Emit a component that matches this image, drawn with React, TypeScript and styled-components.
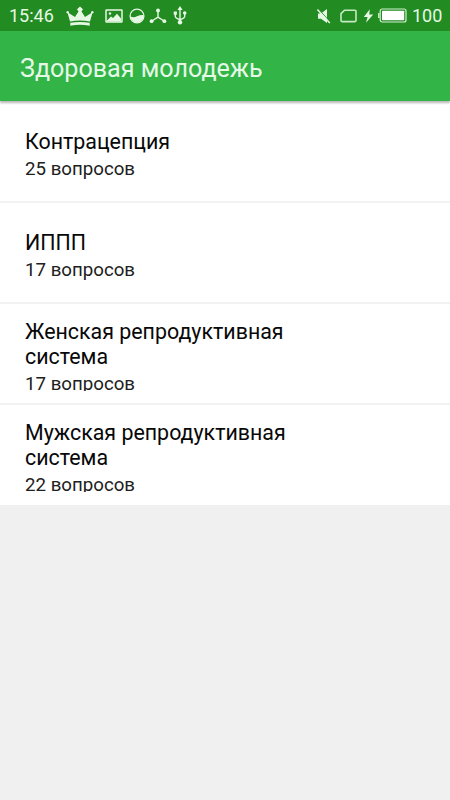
import React from "react";
import styled, { createGlobalStyle } from "styled-components";

const GlobalStyle = createGlobalStyle`
  html, body { margin: 0; padding: 0; }
  body { background: #f0f0f0; font-family: Roboto, "Noto Sans", sans-serif; }
`;

const Screen = styled.div`
  width: 450px;
  height: 800px;
  display: flex;
  flex-direction: column;
  overflow: hidden;
  background: #f0f0f0;
`;

const StatusBar = styled.div`
  height: 31px;
  flex: none;
  display: flex;
  align-items: center;
  justify-content: space-between;
  padding: 0 7px 0 9px;
  box-sizing: border-box;
  background: #228b22;
  color: #e6f8e4;
`;

const StatusGroup = styled.div`
  display: flex;
  align-items: center;
  height: 31px;
`;

const StatusText = styled.span<{ $width: number; $gap?: number }>`
  width: ${(p) => p.$width}px;
  margin-left: ${(p) => p.$gap ?? 0}px;
  font-size: 18px;
  line-height: 31px;
  white-space: nowrap;
`;

const Icon = styled.svg<{ $gap: number }>`
  display: block;
  flex: none;
  margin-left: ${(p) => p.$gap}px;
`;

const Header = styled.header`
  position: relative;
  z-index: 1;
  height: 70px;
  flex: none;
  display: flex;
  align-items: center;
  padding: 6px 20px 0;
  box-sizing: border-box;
  background: #32b446;
  box-shadow: 0 2px 2px rgba(0, 0, 0, 0.28);
`;

const Title = styled.h1`
  margin: 0;
  font-size: 25.1px;
  font-weight: 400;
  line-height: 32px;
  color: #e6f8e8;
  white-space: nowrap;
`;

const List = styled.ul`
  list-style: none;
  margin: 0;
  padding: 0;
  background: #ffffff;
`;

const Row = styled.li<{ $singleLine: boolean }>`
  height: 101px;
  box-sizing: border-box;
  padding: ${(p) => (p.$singleLine ? 19 : 15)}px 25px 12px;
  display: flex;
  align-items: center;
  border-bottom: 2px solid #f2f2f2;

  &:first-child { height: 102px; padding-top: 20px; }
  &:last-child { height: 100px; padding-bottom: 13px; border-bottom: 0; }
`;

const RowBody = styled.div`
  max-width: 280px;
  max-height: 72px;
  overflow: hidden;
`;

const Topic = styled.div`
  font-size: 21.4px;
  line-height: 25px;
  color: #080808;
`;

const Count = styled.div`
  margin-top: 3px;
  font-size: 18.7px;
  line-height: 24px;
  color: #202020;
`;

const topics = [
  { name: "Контрацепция", count: 25, singleLine: true },
  { name: "ИППП", count: 17, singleLine: true },
  { name: "Женская репродуктивная система", count: 17, singleLine: false },
  { name: "Мужская репродуктивная система", count: 22, singleLine: false },
];

const CrownIcon = () => (
  <Icon $gap={12} width="28" height="22" viewBox="0 0 28 22" fill="#e6f8e4">
    <path d="M4 16.5 1.4 7.2 9 12 12.5 6.5 11 4.2 14 1.5 17 4.2 15.5 6.5 19 12 26.6 7.2 24 16.5Q14 14.7 4 16.5Z" />
    <path d="M4.3 17.8Q14 16 23.7 17.8V20.8Q14 18.8 4.3 20.8Z" />
    <circle cx="1.7" cy="7.2" r="1.2" />
    <circle cx="26.3" cy="7.2" r="1.2" />
  </Icon>
);

const PictureIcon = () => (
  <Icon $gap={11} width="18" height="14" viewBox="0 0 18 14" fill="none">
    <rect x="1" y="1" width="16" height="12" rx="0.5" stroke="#e6f8e4" strokeWidth="1.5" />
    <path d="M2 11.5 6 7.5 8 9 12 4.8 16 9.5V12.5H2Z" fill="#e6f8e4" />
    <circle cx="5" cy="4.5" r="1.2" fill="#e6f8e4" />
  </Icon>
);

const GlobeIcon = () => (
  <Icon $gap={6} width="16" height="16" viewBox="0 0 16 16" fill="none">
    <circle cx="8" cy="8" r="6.9" stroke="#e6f8e4" strokeWidth="1.3" />
    <path d="M1.5 8.6Q5 9.8 8 8.3T14.5 7Q15 13.5 8 14.6 2.5 14 1.5 8.6Z" fill="#e6f8e4" />
  </Icon>
);

const NodesIcon = () => (
  <Icon $gap={4} width="18" height="16" viewBox="0 0 18 16" fill="none">
    <path d="M9 3V9.2L3 13M9 9.2 15 13" stroke="#e6f8e4" strokeWidth="1.4" />
    <circle cx="9" cy="2.5" r="1.9" fill="#e6f8e4" />
    <circle cx="2.6" cy="13.2" r="1.9" fill="#e6f8e4" />
    <circle cx="15.4" cy="13.2" r="1.9" fill="#e6f8e4" />
  </Icon>
);

const UsbIcon = () => (
  <Icon $gap={6} width="14" height="19" viewBox="0 0 14 19" fill="none">
    <path d="M7 3V16M2.3 7V10.5Q2.3 12.2 7 13.7 11.7 12.2 11.7 10.5V7" stroke="#e6f8e4" strokeWidth="1.4" />
    <path d="M7 0 9.6 4H4.4ZM.7 5.5H3.9V8.7H.7Z" fill="#e6f8e4" />
    <circle cx="11.7" cy="7" r="1.8" fill="#e6f8e4" />
    <circle cx="7" cy="16.3" r="2.2" fill="#e6f8e4" />
  </Icon>
);

const MuteIcon = () => (
  <Icon $gap={0} width="16" height="16" viewBox="0 0 16 16" fill="none">
    <path d="M2 5.5H5L11 1V15L5 10.8H2Z" fill="#e6f8e4" />
    <path d="M2.4 1 14.6 14.3" stroke="#228b22" strokeWidth="1" />
    <path d="M1.4 1.4 13.8 14.9" stroke="#e6f8e4" strokeWidth="1.5" />
  </Icon>
);

const SimIcon = () => (
  <Icon $gap={8} width="17" height="14" viewBox="0 0 17 14" fill="none">
    <path d="M4.5 1.2H15Q16 1.2 16 2.2V11.6Q16 12.6 15 12.6H2Q1 12.6 1 11.6V4.7Z" stroke="#c5ecc0" strokeWidth="1.6" />
  </Icon>
);

const BoltIcon = () => (
  <Icon $gap={6} width="11" height="14" viewBox="0 0 11 14" fill="#e6f8e4">
    <path d="M6.8.3.8 8H4.6L3 13.8 10.2 5.6H6.2Z" />
  </Icon>
);

const BatteryIcon = () => (
  <Icon $gap={4} width="29" height="15" viewBox="0 0 29 15" fill="none">
    <rect x="2.2" y="1" width="25.8" height="13" rx="2" stroke="#d4f2d0" strokeWidth="1.2" />
    <rect x="4" y="2.8" width="22.2" height="9.4" rx="0.4" fill="#ffffff" />
    <path d="M.8 5V10" stroke="#d4f2d0" strokeWidth="1.4" />
  </Icon>
);

export default function App() {
  return (
    <>
      <GlobalStyle />
      <Screen>
        <StatusBar>
          <StatusGroup>
            <StatusText $width={45}>15:46</StatusText>
            <CrownIcon />
            <PictureIcon />
            <GlobeIcon />
            <NodesIcon />
            <UsbIcon />
          </StatusGroup>
          <StatusGroup>
            <MuteIcon />
            <SimIcon />
            <BoltIcon />
            <BatteryIcon />
            <StatusText $width={31} $gap={5}>100</StatusText>
          </StatusGroup>
        </StatusBar>
        <Header>
          <Title>Здоровая молодежь</Title>
        </Header>
        <List>
          {topics.map((topic) => (
            <Row key={topic.name} $singleLine={topic.singleLine}>
              <RowBody>
                <Topic>{topic.name}</Topic>
                <Count>{topic.count} вопросов</Count>
              </RowBody>
            </Row>
          ))}
        </List>
      </Screen>
    </>
  );
}
